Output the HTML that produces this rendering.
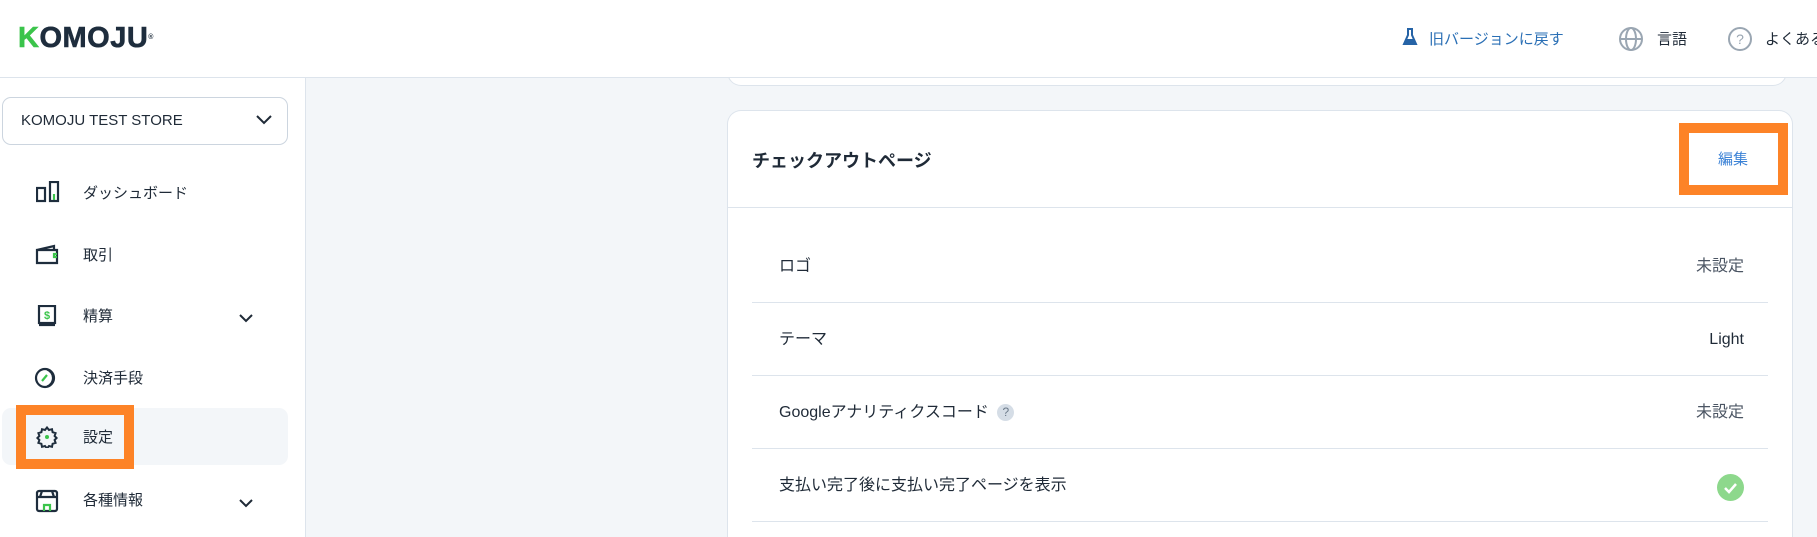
<!DOCTYPE html>
<html><head><meta charset="utf-8"><style>
*{margin:0;padding:0;box-sizing:border-box}
html,body{width:1817px;height:537px;overflow:hidden}
body{background:#f3f6f9;font-family:"Liberation Sans","Noto Sans CJK JP",sans-serif;color:#1f2a37;position:relative}
.abs{position:absolute}
.header{left:0;top:0;width:1817px;height:78px;background:#fff;border-bottom:1px solid #dde4ec}
.side{left:0;top:78px;width:306px;height:459px;background:#fff;border-right:1px solid #dde4ec}
.mi{position:absolute;left:83px;font-size:15px;color:#1f2a37;line-height:20px}
.card{left:727px;top:110px;width:1066px;height:427px;background:#fff;border:1px solid #dde4ec;border-bottom:none;border-radius:14px 14px 0 0}
.row{position:absolute;left:24px;width:1016px;height:1px;background:#dde4ec}
.lbl{position:absolute;left:51px;font-size:16px;line-height:22px;color:#1f2a37}
.val{position:absolute;right:48px;font-size:16px;line-height:22px;color:#4b5563}
</style></head><body>
<div class="abs" style="left:727px;top:40px;width:1060px;height:46px;background:#fff;border:1px solid #dde4ec;border-top:none;border-radius:0 0 14px 14px"></div>
<div class="abs header"></div>
<div class="abs" style="left:18px;top:23px;font-size:29px;font-weight:900;letter-spacing:0.5px;color:#1e2d3d;line-height:30px;-webkit-text-stroke:0.6px #1e2d3d"><span style="color:#3bc44b;-webkit-text-stroke:0.6px #3bc44b">K</span>OMOJU<sup style="font-size:7px;vertical-align:top;-webkit-text-stroke:0">®</sup></div>
<svg class="abs" style="left:1402px;top:28px" width="16" height="18" viewBox="0 0 16 18"><path d="M5 1h6M6 1v6L2 16h12L10 7V1" fill="none" stroke="#2563a6" stroke-width="2"/><path d="M4 11h8l2 5H2z" fill="#2563a6"/></svg>
<div class="abs" style="left:1429px;top:28px;font-size:15px;color:#2a6fb5">旧バージョンに戻す</div>
<svg class="abs" style="left:1618px;top:26px" width="26" height="26" viewBox="0 0 26 26" fill="none" stroke="#9aa6b2" stroke-width="2"><circle cx="13" cy="13" r="11"/><ellipse cx="13" cy="13" rx="5" ry="11"/><path d="M2 13h22"/></svg>
<div class="abs" style="left:1657px;top:28px;font-size:15px;color:#1f2a37">言語</div>
<svg class="abs" style="left:1727px;top:26px" width="26" height="26" viewBox="0 0 26 26"><circle cx="13" cy="13" r="11" fill="none" stroke="#9aa6b2" stroke-width="2"/><text x="13" y="18" text-anchor="middle" font-size="14" fill="#9aa6b2" font-family="Liberation Sans">?</text></svg>
<div class="abs" style="left:1765px;top:28px;font-size:15px;color:#1f2a37;white-space:nowrap">よくある質問</div>

<div class="abs side"></div>
<div class="abs" style="left:2px;top:97px;width:286px;height:48px;border:1.5px solid #ccd5df;border-radius:9px;background:#fff"></div>
<div class="abs" style="left:21px;top:112px;font-size:15px;color:#1f2a37">KOMOJU TEST STORE</div>
<svg class="abs" style="left:254px;top:113px" width="20" height="14" viewBox="0 0 20 14"><path d="M3 3l7 7 7-7" fill="none" stroke="#1f2a37" stroke-width="2"/></svg>

<svg class="abs" style="left:36px;top:181px" width="24" height="22" viewBox="0 0 24 22" fill="none" stroke="#1e2d3d" stroke-width="2.2"><rect x="1" y="7" width="8" height="13"/><rect x="14" y="1" width="8" height="19"/><path d="M18 13v6" stroke="#3bc44b"/></svg>
<div class="mi" style="top:184px">ダッシュボード</div>
<svg class="abs" style="left:35px;top:244px" width="24" height="21" viewBox="0 0 24 21" fill="none" stroke="#1e2d3d" stroke-width="2.2"><path d="M2 6h20v13H2zM2 6l17-4v4"/><path d="M22 10h-3v3h3" stroke="#3bc44b"/></svg>
<div class="mi" style="top:246px">取引</div>
<svg class="abs" style="left:37px;top:305px" width="20" height="22" viewBox="0 0 20 22" fill="none" stroke="#1e2d3d" stroke-width="2.2"><rect x="2" y="1" width="16" height="17"/><path d="M2 20h16"/><text x="10" y="14" text-anchor="middle" font-size="11" font-weight="bold" fill="#3bc44b" stroke="none" font-family="Liberation Sans">$</text></svg>
<div class="mi" style="top:307px">精算</div>
<svg class="abs" style="left:238px;top:312px" width="16" height="12" viewBox="0 0 16 12"><path d="M2 3l6 6 6-6" fill="none" stroke="#1f2a37" stroke-width="2"/></svg>
<svg class="abs" style="left:34px;top:367px" width="26" height="22" viewBox="0 0 26 22" fill="none" stroke="#1e2d3d" stroke-width="2.2"><circle cx="11" cy="11" r="9"/><path d="M13 2.5a9 9 0 0 1 0 17"/><path d="M8 14l5-6" stroke="#3bc44b"/></svg>
<div class="mi" style="top:369px">決済手段</div>
<div class="abs" style="left:2px;top:408px;width:286px;height:57px;background:#f3f6f9;border-radius:9px"></div>
<div class="abs" style="left:16px;top:405px;width:118px;height:64px;border:10px solid #fd8327"></div>
<svg class="abs" style="left:36px;top:426px" width="22" height="22" viewBox="0 0 22 22"><path d="M11 1.5l2 2.5 3-.8.6 3 3 .9-1 2.9 2 2-2 2 1 2.9-3 .9-.6 3-3-.8-2 2.5-2-2.5-3 .8-.6-3-3-.9 1-2.9-2-2 2-2-1-2.9 3-.9.6-3 3 .8z" fill="none" stroke="#1e2d3d" stroke-width="2"/><circle cx="11" cy="11" r="2" fill="#3bc44b"/></svg>
<div class="mi" style="top:428px">設定</div>
<svg class="abs" style="left:35px;top:489px" width="24" height="24" viewBox="0 0 24 24" fill="none" stroke="#1e2d3d" stroke-width="2.2"><rect x="2" y="2" width="20" height="20" rx="2"/><path d="M2 8h20M7 2l-2 6M17 2l2 6"/><path d="M9 22v-6h6v6" stroke="#3bc44b"/></svg>
<div class="mi" style="top:491px">各種情報</div>
<svg class="abs" style="left:238px;top:497px" width="16" height="12" viewBox="0 0 16 12"><path d="M2 3l6 6 6-6" fill="none" stroke="#1f2a37" stroke-width="2"/></svg>

<div class="abs card">
<div class="abs" style="left:24px;top:36px;font-size:18px;font-weight:bold;color:#1f2a37">チェックアウトページ</div>
<div class="abs" style="left:0;top:96px;width:1064px;height:1px;background:#dde4ec"></div>
<div class="lbl" style="top:145px">ロゴ</div><div class="val" style="top:145px">未設定</div>
<div class="row" style="top:191px"></div>
<div class="lbl" style="top:218px">テーマ</div><div class="val" style="top:218px;color:#1f2a37">Light</div>
<div class="row" style="top:264px"></div>
<div class="lbl" style="top:291px">Googleアナリティクスコード <span style="display:inline-block;width:17px;height:17px;border-radius:50%;background:#d5dde6;color:#6b7a8a;font-size:12px;text-align:center;line-height:17px;vertical-align:1px;margin-left:4px">?</span></div><div class="val" style="top:291px">未設定</div>
<div class="row" style="top:337px"></div>
<div class="lbl" style="top:364px">支払い完了後に支払い完了ページを表示</div>
<svg class="abs" style="left:989px;top:363px" width="27" height="27" viewBox="0 0 27 27"><circle cx="13.5" cy="13.5" r="13.5" fill="#8dd88c"/><path d="M8 14l4 4 7-8" fill="none" stroke="#fff" stroke-width="2.5"/></svg>
<div class="row" style="top:410px"></div>
</div>
<div class="abs" style="left:1679px;top:123px;width:109px;height:72px;border:10px solid #fd8327;background:#fff"></div>
<div class="abs" style="left:1718px;top:148px;font-size:15px;color:#3b82d6">編集</div>
</body></html>
